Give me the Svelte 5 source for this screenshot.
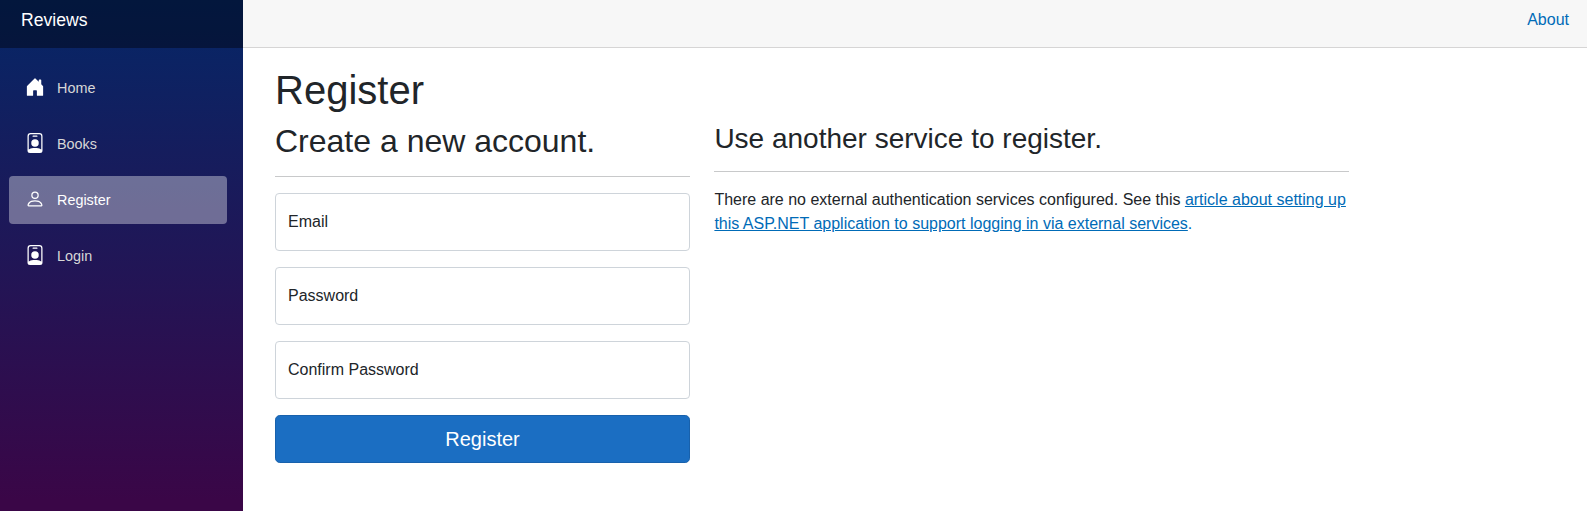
<script>
  const home = 'M6.5 14.5v-3.505c0-.245.25-.495.5-.495h2c.25 0 .5.25.5.5v3.5a.5.5 0 0 0 .5.5h4a.5.5 0 0 0 .5-.5v-7a.5.5 0 0 0-.146-.354L13 5.793V2.5a.5.5 0 0 0-.5-.5h-1a.5.5 0 0 0-.5.5v1.293L8.354 1.146a.5.5 0 0 0-.708 0l-6 6A.5.5 0 0 0 1.5 7.5v7a.5.5 0 0 0 .5.5h4a.5.5 0 0 0 .5-.5Z';
  const badge = 'M6.5 2a.5.5 0 0 0 0 1h3a.5.5 0 0 0 0-1h-3zM11 8a3 3 0 1 1-6 0 3 3 0 0 1 6 0zM4.5 0A2.5 2.5 0 0 0 2 2.5V14a2 2 0 0 0 2 2h8a2 2 0 0 0 2-2V2.5A2.5 2.5 0 0 0 11.5 0h-7zM3 2.5A1.5 1.5 0 0 1 4.5 1h7A1.5 1.5 0 0 1 13 2.5v10.795a4.2 4.2 0 0 0-.776-.492C11.392 12.387 10.063 12 8 12s-3.392.387-4.224.803a4.2 4.2 0 0 0-.776.492V2.5z';
  const person = 'M8 8a3 3 0 1 0 0-6 3 3 0 0 0 0 6Zm2-3a2 2 0 1 1-4 0 2 2 0 0 1 4 0Zm4 8c0 1-1 1-1 1H3s-1 0-1-1 1-4 6-4 6 3 6 4Zm-1-.004c-.001-.246-.154-.986-.832-1.664C11.516 10.68 10.289 10 8 10c-2.29 0-3.516.68-4.168 1.332-.678.678-.83 1.418-.832 1.664h10Z';

  const links = [
    { label: 'Home', icon: home },
    { label: 'Books', icon: badge },
    { label: 'Register', icon: person, active: true },
    { label: 'Login', icon: badge }
  ];
  const fields = ['Email', 'Password', 'Confirm Password'];
</script>

<div class="page">
  <aside class="sidebar">
    <div class="brand"><span>Reviews</span></div>
    <nav>
      {#each links as link}
        <a href="#top" class="nav-link" class:active={link.active}>
          <svg viewBox="0 0 16 16" width="20" height="20" fill="#fff"><path d={link.icon} /></svg>
          <span>{link.label}</span>
        </a>
      {/each}
    </nav>
  </aside>
  <main>
    <header class="top-row"><a href="#top">About</a></header>
    <article>
      <h1>Register</h1>
      <div class="row">
        <section>
          <h2>Create a new account.</h2>
          <hr />
          <form>
            {#each fields as field}
              <label class="field">{field}</label>
            {/each}
            <button type="button">Register</button>
          </form>
        </section>
        <section class="external">
          <h3>Use another service to register.</h3>
          <hr />
          <p>There are no external authentication services configured. See this <a href="#top">article about setting up this ASP.NET application to support logging in via external services</a><span class="stop">.</span></p>
        </section>
      </div>
    </article>
  </main>
</div>

<style>
  :global(body) {
    margin: 0;
    overflow: hidden;
  }
  .page {
    display: flex;
    height: 511px;
    overflow: hidden;
    background: #fff;
    color: #212529;
    font: 16px/24px "Liberation Sans", Arial, sans-serif;
  }
  .page, .page * {
    box-sizing: border-box;
  }
  .sidebar {
    width: 243px;
    flex: none;
    background: linear-gradient(180deg, rgb(5, 39, 103) 0, #3a0647 500px);
  }
  .brand {
    height: 48px;
    padding: 7px 0 0 21px;
    background: rgba(0, 0, 0, 0.4);
    color: #fff;
    font-size: 17.6px;
    line-height: 27px;
  }
  nav {
    display: flex;
    flex-direction: column;
    gap: 8px;
    padding: 16px 16px 0 9px;
  }
  .nav-link {
    display: flex;
    align-items: center;
    gap: 12px;
    height: 48px;
    padding: 0 16px;
    border-radius: 4px;
    color: #d7d7d7;
    font-size: 14.4px;
    line-height: 48px;
    text-decoration: none;
  }
  .nav-link svg {
    flex: none;
    margin-bottom: 2px;
  }
  .nav-link.active {
    background: rgba(255, 255, 255, 0.37);
    color: #fff;
  }
  main {
    flex: 1;
    min-width: 0;
  }
  .top-row {
    display: flex;
    justify-content: flex-end;
    height: 48px;
    padding: 8px 18px 0 0;
    border-bottom: 1px solid #d6d5d5;
    background: #f7f7f7;
  }
  a, .stop {
    color: #006bb7;
  }
  .top-row a {
    text-decoration: none;
  }
  article {
    padding: 18px 0 0 32px;
  }
  h1, h2, h3 {
    margin: 0;
    font-weight: 500;
    line-height: 1.2;
  }
  h1 {
    margin-bottom: 8px;
    font-size: 40px;
  }
  h2 {
    font-size: 32px;
  }
  h3 {
    font-size: 28px;
    line-height: 33.3px;
  }
  .row {
    display: grid;
    grid-template-columns: 415px 635px;
    column-gap: 24px;
  }
  .external {
    padding-left: 0.4px;
  }
  hr {
    margin: 16px 0;
    border: 0;
    border-top: 1px solid #c8c9ca;
  }
  form {
    display: flex;
    flex-direction: column;
    gap: 16px;
  }
  .field {
    height: 58px;
    padding: 16px 12px;
    border: 1px solid #ced4da;
    border-radius: 4px;
  }
  button {
    height: 48px;
    padding: 0;
    border: 1px solid #1861ac;
    border-radius: 4.8px;
    background: #1b6ec2;
    color: #fff;
    font: 20px/30px "Liberation Sans", Arial, sans-serif;
  }
  p {
    margin: 0;
  }
</style>
